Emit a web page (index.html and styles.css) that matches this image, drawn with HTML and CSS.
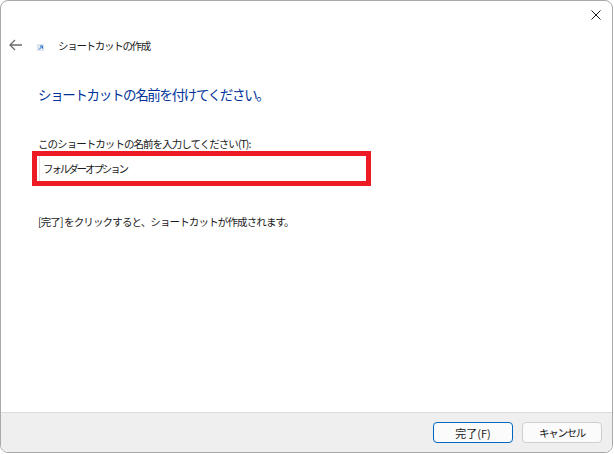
FILE: index.html
```html
<!DOCTYPE html>
<html lang="ja">
<head>
    <meta charset="UTF-8">
    <title>ショートカットの作成</title>
    <link rel="stylesheet" href="styles.css">
</head>
<body>
    <div class="window">
        <div class="title-row">
            <svg class="close-icon" width="10" height="10" viewBox="0 0 10 10">
                <path d="M0.5 0.5L9.5 9.5M9.5 0.5L0.5 9.5" stroke="#1a1a1a" stroke-width="1" fill="none"/>
            </svg>
        </div>
        <div class="nav-row">
            <svg class="back-icon" width="13" height="12" viewBox="0 0 13 12">
                <path d="M6 1L1 6L6 11M1 6H13" stroke="#6b6b6b" stroke-width="1.3" fill="none"/>
            </svg>
            <svg class="shortcut-icon" width="7" height="7" viewBox="0 0 7 7">
                <rect x="0" y="0" width="7" height="7" fill="#dfe6ee"/>
                <path d="M2 5.5L5 2.5M3 2H5.5V4.5" stroke="#1f6fd0" stroke-width="1" fill="none"/>
            </svg>
            <span class="nav-title">ショートカットの作成</span>
        </div>
        <div class="content">
            <h1>ショートカットの名前を付けてください。</h1>
            <label class="name-label" for="name">このショートカットの名前を入力してください(T):</label>
            <input class="name-input" id="name" type="text" value="フォルダーオプション">
            <p class="hint">[完了] をクリックすると、ショートカットが作成されます。</p>
        </div>
        <div class="footer">
            <button class="button primary">完了(F)</button>
            <button class="button cancel">キャンセル</button>
        </div>
    </div>
</body>
</html>
```

FILE: styles.css
```css
body {
    margin: 0;
    padding: 0;
    background-color: #fff;
    font-family: "Noto Sans CJK JP", "Liberation Sans", sans-serif;
    font-size: 10.5px;
    color: #1a1a1a;
}

.window {
    width: 613px;
    height: 453px;
    box-sizing: border-box;
    border: 1px solid #a9a9a9;
    border-radius: 8px;
    overflow: hidden;
    display: flex;
    flex-direction: column;
    background-color: #fff;
}

.title-row {
    height: 30px;
    display: flex;
    justify-content: flex-end;
    padding: 9px 11px 0 0;
    box-sizing: border-box;
}

.nav-row {
    height: 28px;
    display: flex;
    align-items: center;
    padding-left: 8px;
}

.shortcut-icon {
    margin: 4px 0 0 15px;
}

.nav-title {
    margin-left: 14px;
    font-size: 10.5px;
    letter-spacing: -1.3px;
}

.content {
    flex: 1;
    padding: 0 0 0 37px;
}

h1 {
    margin: 25px 0 0;
    font-size: 13.5px;
    font-weight: normal;
    line-height: 20px;
    letter-spacing: -1.35px;
    color: #003399;
}

.name-label {
    display: block;
    margin-top: 32px;
    line-height: 16px;
    letter-spacing: -0.95px;
}

.name-input {
    display: block;
    width: 339px;
    height: 35px;
    box-sizing: border-box;
    margin: -1px 0 0 -6px;
    padding: 0 0 0 6px;
    border: 5px solid #ed1c24;
    box-shadow: inset 2px 0 0 #fff, inset 3px 0 0 #e2e2e2;
    background-color: #fff;
    font-family: inherit;
    font-size: 10.5px;
    letter-spacing: -2.1px;
    color: #1a1a1a;
    outline: none;
}

.hint {
    margin: 28px 0 0;
    line-height: 16px;
    letter-spacing: -0.87px;
}

.footer {
    height: 40px;
    box-sizing: border-box;
    border-top: 1px solid #dcdcdc;
    background-color: #efefef;
    display: flex;
    justify-content: flex-end;
    align-items: center;
    gap: 9px;
    padding-right: 10px;
}

.button {
    width: 80px;
    height: 21px;
    padding: 0;
    background-color: #fbfbfb;
    border: 1px solid #cfcfcf;
    border-radius: 4px;
    font-family: inherit;
    font-size: 11px;
    color: #1a1a1a;
}

.button.primary {
    border: 1px solid #0067c0;
}

.button.cancel {
    font-size: 10.5px;
    letter-spacing: -1.3px;
}
```
